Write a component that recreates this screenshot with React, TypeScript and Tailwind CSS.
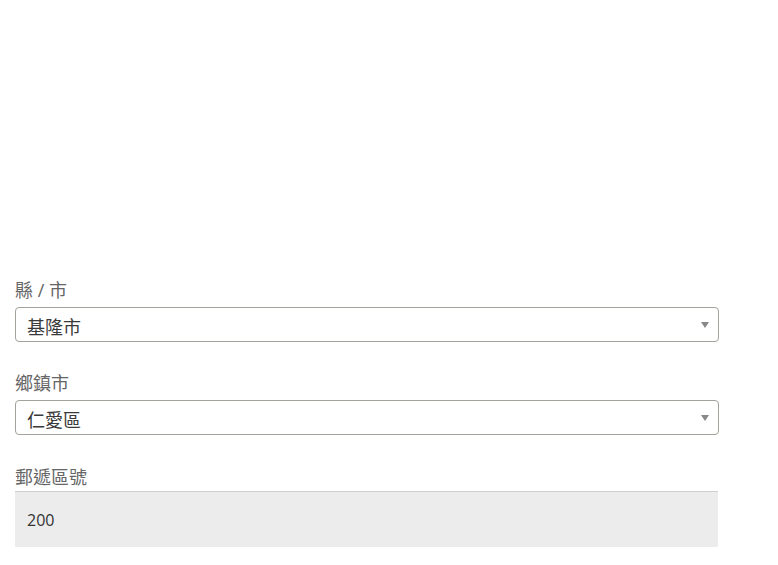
import React from 'react';

const font = { fontFamily: '"Open Sans", "Noto Sans CJK TC", sans-serif' };

function SelectField({ label, value, mb }: { label: string; value: string; mb: string }) {
  return (
    <div className={mb}>
      <label className="block text-[18px] leading-[26px] text-[#666] mb-[4px]">{label}</label>
      <div className="relative h-[35px] border border-[#a0a49c] rounded-[4px] bg-white flex items-center pl-[11px]">
        <span className="text-[18px] text-[#3a3a3a] leading-none pt-[5px]">{value}</span>
        <span className="absolute right-[9px] top-[14px] w-0 h-0 border-l-[4px] border-r-[4px] border-t-[6px] border-l-transparent border-r-transparent border-t-[#888]" />
      </div>
    </div>
  );
}

export default function App() {
  return (
    <div className="w-[778px] h-[565px] bg-white overflow-hidden" style={font}>
      <div className="pt-[277px] pl-[15px] w-[719px]">
        <SelectField label="縣 / 市" value="基隆市" mb="mb-[28px]" />
        <SelectField label="鄉鎮市" value="仁愛區" mb="mb-[29px]" />
        <div>
          <label className="block text-[18px] leading-[26px] text-[#666] mb-[1px]">郵遞區號</label>
          <div className="h-[56px] bg-[#ececec] border-t border-[#cfcfcf] flex items-center pl-[12px] mr-[1px]">
            <span className="text-[16px] text-[#333]">200</span>
          </div>
        </div>
      </div>
    </div>
  );
}
